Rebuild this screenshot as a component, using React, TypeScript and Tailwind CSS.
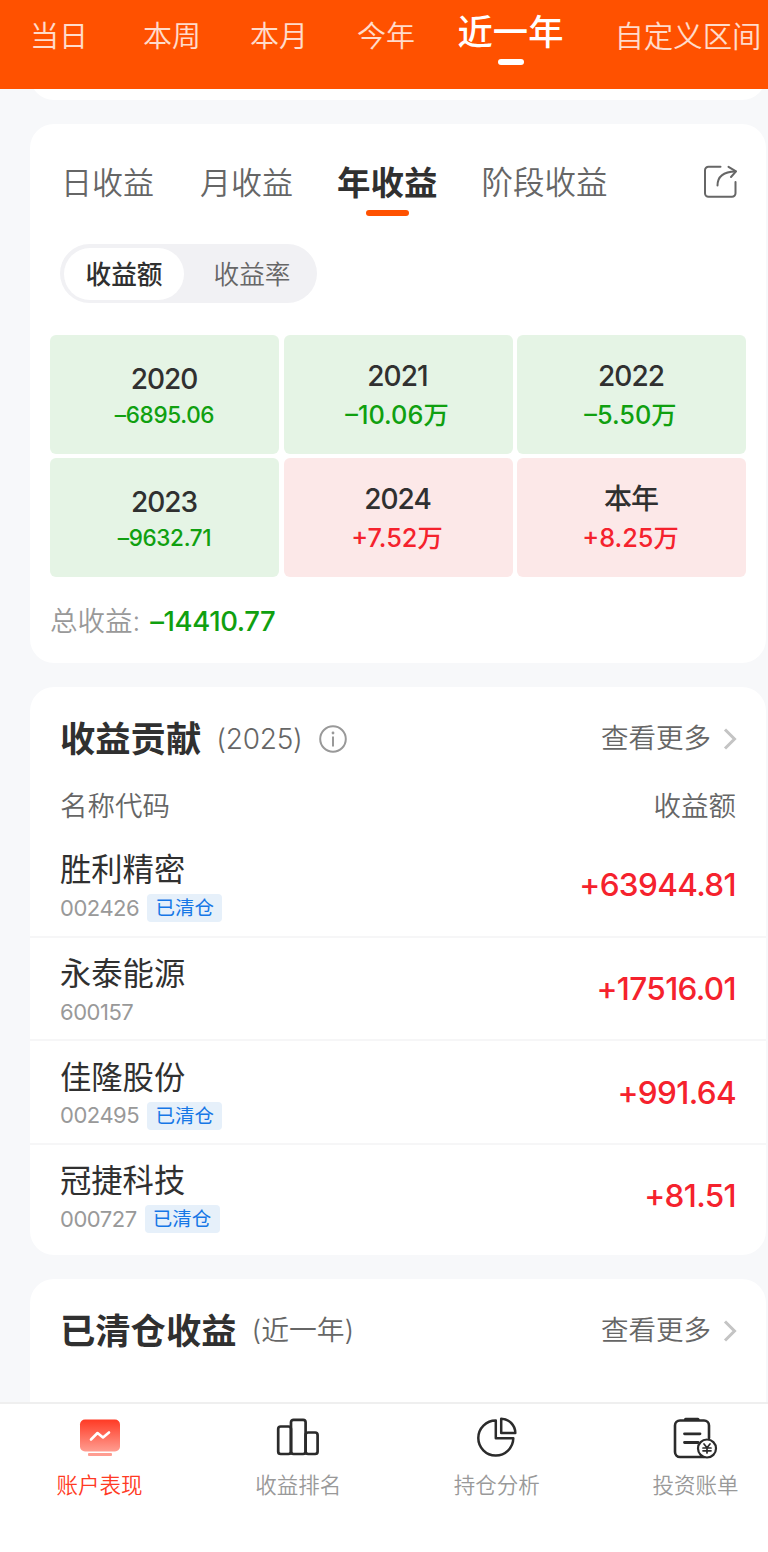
import type { ReactNode } from "react";
import clsx from "clsx";

const ranges = [
  { label: "当日", className: "" },
  { label: "本周", className: "ml-[55px]" },
  { label: "本月", className: "ml-[49px]" },
  { label: "今年", className: "ml-[49px]" },
];

const years = [
  { year: "2020", value: "–6895.06", up: false },
  { year: "2021", value: "–10.06", unit: "万", up: false },
  { year: "2022", value: "–5.50", unit: "万", up: false },
  { year: "2023", value: "–9632.71", up: false },
  { year: "2024", value: "+7.52", unit: "万", up: true },
  { year: "本年", value: "+8.25", unit: "万", up: true },
];

const stocks = [
  { name: "胜利精密", code: "002426", cleared: true, amount: "+63944.81" },
  { name: "永泰能源", code: "600157", cleared: false, amount: "+17516.01" },
  { name: "佳隆股份", code: "002495", cleared: true, amount: "+991.64" },
  { name: "冠捷科技", code: "000727", cleared: true, amount: "+81.51" },
];

function ShareIcon() {
  return (
    <svg width="36" height="36" viewBox="0 0 36 36" fill="none" stroke="#666" strokeWidth="2" strokeLinecap="round" strokeLinejoin="round">
      <path d="M18.500 2.800H6.500a3.500 3.500 0 0 0-3.500 3.500V29.200a3.500 3.500 0 0 0 3.500 3.500h23.500a3.500 3.500 0 0 0 3.500-3.500V18" />
      <path d="M15.500 21.500C15.500 13.500 20.500 7.600 33.500 7.400" />
      <path d="M26.500 2.800L34 7.400L29 13" />
    </svg>
  );
}

function Chevron() {
  return (
    <svg width="14" height="22" viewBox="0 0 14 22" fill="none" stroke="#c4c4c4" strokeWidth="3">
      <path d="M2 1.500L11.500 11L2 20.500" />
    </svg>
  );
}

function InfoIcon() {
  return (
    <svg width="30" height="30" viewBox="0 0 30 30" fill="none" stroke="#999" strokeWidth="2">
      <circle cx="15" cy="15" r="12.800" />
      <path d="M15 12.500V22.500" />
      <circle cx="15" cy="9" r="1.400" fill="#999" stroke="none" />
    </svg>
  );
}

function MonitorIcon() {
  return (
    <svg width="48" height="44" viewBox="0 0 48 44" fill="none">
      <defs>
        <linearGradient id="screen" x1="0" y1="0" x2="0" y2="1">
          <stop offset="0" stopColor="#ff3a24" />
          <stop offset="1" stopColor="#ff9d91" />
        </linearGradient>
      </defs>
      <rect x="4" y="3.500" width="40" height="32" rx="5" fill="url(#screen)" />
      <path d="M15 23.500L21.500 17L27 21.500L33 16.500" stroke="#fff" strokeWidth="2.600" strokeLinecap="round" strokeLinejoin="round" />
      <rect x="12" y="37" width="24" height="3" rx="1" fill="#ff9d91" />
    </svg>
  );
}

function BarsIcon() {
  return (
    <svg width="48" height="44" viewBox="0 0 48 44" fill="none" stroke="#2b2b2b" strokeWidth="2.700" strokeLinejoin="round">
      <rect x="4.200" y="10.500" width="12.800" height="27.500" rx="2.500" />
      <rect x="17" y="3.800" width="14.600" height="34.200" rx="2.500" />
      <rect x="31.600" y="16.500" width="12" height="21.500" rx="2.500" />
    </svg>
  );
}

function PieIcon() {
  return (
    <svg width="48" height="44" viewBox="0 0 48 44" fill="none" stroke="#2b2b2b" strokeWidth="2.500" strokeLinejoin="round">
      <path d="M22.800 4.500A17.500 17.500 0 1 0 40.300 22.300H22.800Z" />
      <path d="M28.200 2.800A14.200 14.200 0 0 1 42.300 17H28.200Z" />
    </svg>
  );
}

function BillIcon() {
  return (
    <svg width="48" height="44" viewBox="0 0 48 44" fill="none" stroke="#2b2b2b" strokeWidth="2.600" strokeLinecap="round" strokeLinejoin="round">
      <path d="M38 22V9.500A5 5 0 0 0 33 4.500H9A5 5 0 0 0 4 9.500V36A5 5 0 0 0 9 41H33" />
      <path d="M14.500 3.300H27" strokeWidth="3" />
      <path d="M13.500 17.800H29M13.500 26.500H27" strokeWidth="2.800" />
      <circle cx="36" cy="32.500" r="9" fill="#fff" strokeWidth="2.200" />
      <path d="M33 28L36 31.800L39 28M36 31.800V37M32 32H40M32 34.800H40" strokeWidth="1.700" />
    </svg>
  );
}

function MoreLink() {
  return (
    <div className="ml-auto flex items-center gap-3 text-[27.500px] font-[350] text-[#666]">
      <span className="pt-px">查看更多</span>
      <Chevron />
    </div>
  );
}

function NavItem({ icon, label, active }: { icon: ReactNode; label: string; active?: boolean }) {
  return (
    <div className="flex w-[87px] flex-col items-center">
      {icon}
      <span
        className={clsx(
          "mt-[10px] text-[21.500px] leading-[30px] font-[350] whitespace-nowrap",
          active ? "text-[#ff3a24]" : "text-[#999]"
        )}
      >
        {label}
      </span>
    </div>
  );
}

export default function App() {
  return (
    <div className="flex h-[1552px] w-[768px] flex-col overflow-hidden bg-[#f7f8fa] font-['Inter','Noto_Sans_CJK_SC',sans-serif] text-[#303030]">
      {/* Date range tabs */}
      <header className="flex h-[88.500px] shrink-0 bg-[#ff5100] pl-[30px] text-[29px] leading-[40px] whitespace-nowrap text-white/80">
        {ranges.map((r) => (
          <span key={r.label} className={clsx("mt-[17px] font-[350]", r.className)}>
            {r.label}
          </span>
        ))}
        <div className="mt-[13px] ml-[42.500px] flex flex-col items-center">
          <span className="text-[35.300px] font-medium text-white">近一年</span>
          <span className="mt-1.5 h-1.5 w-[26px] rounded-full bg-white" />
        </div>
        <span className="mt-[17px] ml-[51px] text-[29.400px] font-[350]">自定义区间</span>
      </header>

      <div className="mr-0.5 ml-[30px] flex grow flex-col">
        {/* Tail of the card scrolled under the header */}
        <div className="flex h-[11px] shrink-0 items-end overflow-hidden">
          <div className="h-[60px] w-full shrink-0 rounded-[24px] bg-white" />
        </div>

        {/* Yearly profit */}
        <section className="mt-[24.500px] h-[539px] shrink-0 rounded-[24px] bg-white">
          <div className="flex pt-[38px] pl-[31px] text-[31px] leading-[42px] whitespace-nowrap text-[#666]">
            <span className="font-[350]">日收益</span>
            <span className="ml-[46px] font-[350]">月收益</span>
            <div className="ml-[44px] flex flex-col items-center">
              <span className="text-[33.500px] font-bold text-[#303030]">年收益</span>
              <span className="mt-1.5 h-1.5 w-[43px] rounded-full bg-[#ff5100]" />
            </div>
            <span className="ml-[44px] text-[31.500px] font-[350]">阶段收益</span>
            <div className="mt-0.5 mr-7 ml-auto">
              <ShareIcon />
            </div>
          </div>

          <div className="mt-7 ml-[30px] flex h-[59px] w-[257px] items-center rounded-full bg-[#f1f1f4] p-1 text-[25.700px] leading-[36px]">
            <span className="flex h-[52px] w-[120px] items-center justify-center rounded-full bg-white pt-0.5 font-medium">收益额</span>
            <span className="ml-[29.500px] pt-0.5 font-[350] text-[#666]">收益率</span>
          </div>

          <div className="mt-8 ml-5 grid w-[696px] grid-cols-3 gap-[4.500px]">
            {years.map((y) => (
              <div
                key={y.year}
                className={clsx(
                  "flex h-[118.500px] flex-col items-center rounded-md font-medium",
                  y.up ? "bg-[#fce8e8]" : "bg-[#e5f4e5]",
                  y.unit ? "pt-[23px]" : "pt-[26px]"
                )}
              >
                <span className="pr-px text-[28px] leading-[36px] tracking-[-0.035em]">{y.year}</span>
                <span
                  className={clsx(
                    "leading-[38px]",
                    y.unit ? "mt-0.5 pr-0.5 text-[25.300px]" : "-mt-px text-[22.500px] tracking-[-0.015em]",
                    y.up ? "text-[#f5222d]" : "text-[#10a010]"
                  )}
                >
                  {y.value}
                  {y.unit}
                </span>
              </div>
            ))}
          </div>

          <div className="mt-[24.500px] ml-5 flex text-[27.500px] leading-[40px] text-[#999]">
            <span className="font-[350]">总收益:</span>
            <span className="ml-2.5 font-medium tracking-[-0.015em] text-[#10a010]">–14410.77</span>
          </div>
        </section>

        {/* Profit contribution */}
        <section className="mt-6 h-[568px] shrink-0 rounded-[24px] bg-white">
          <div className="mt-[27.500px] flex h-[48px] items-center pr-[29px] pl-[30px]">
            <h2 className="pt-[3px] text-[35.300px] font-bold">收益贡献</h2>
            <span className="ml-[15px] text-[28px] font-[350] tracking-[-0.008em] text-[#666]">(2025)</span>
            <div className="ml-[15px]">
              <InfoIcon />
            </div>
            <MoreLink />
          </div>
          <div className="mt-[23.500px] flex justify-between px-[30px] text-[27.500px] leading-[40px] font-[350] text-[#666]">
            <span>名称代码</span>
            <span>收益额</span>
          </div>
          <div className="mt-2">
            {stocks.map((s) => (
              <div
                key={s.code}
                className="flex h-[103.700px] items-center justify-between border-b-2 border-[#f6f6f7] px-[30px] last:border-transparent"
              >
                <div className="pt-px">
                  <p className="text-[31.300px] leading-[44px] font-[380]">{s.name}</p>
                  <div className="mt-0.5 flex h-7 items-center gap-2">
                    <span className="text-[22px] font-[380] tracking-[-0.022em] text-[#999]">{s.code}</span>
                    {s.cleared && (
                      <span className="flex h-[28px] w-[75px] items-center justify-center rounded bg-[#e6f0fa] pt-px text-[19.500px] font-[380] text-[#1677e6]">
                        已清仓
                      </span>
                    )}
                  </div>
                </div>
                <span className="text-[31.500px] font-medium tracking-[-0.02em] text-[#f5222d]">{s.amount}</span>
              </div>
            ))}
          </div>
        </section>

        {/* Closed positions */}
        <section className="mt-6 grow rounded-t-[24px] bg-white">
          <div className="mt-[27.500px] flex h-[48px] items-center pr-[29px] pl-[30px]">
            <h2 className="pt-[3px] text-[35.300px] font-bold">已清仓收益</h2>
            <span className="ml-[15px] pt-px text-[27.800px] font-[350] text-[#666]">(近一年)</span>
            <MoreLink />
          </div>
        </section>
      </div>

      <nav className="flex h-[150px] shrink-0 justify-between border-t-2 border-[#efefef] bg-white pt-3 pr-[29px] pl-[56px]">
        <NavItem icon={<MonitorIcon />} label="账户表现" active />
        <NavItem icon={<BarsIcon />} label="收益排名" />
        <NavItem icon={<PieIcon />} label="持仓分析" />
        <NavItem icon={<BillIcon />} label="投资账单" />
      </nav>
    </div>
  );
}
